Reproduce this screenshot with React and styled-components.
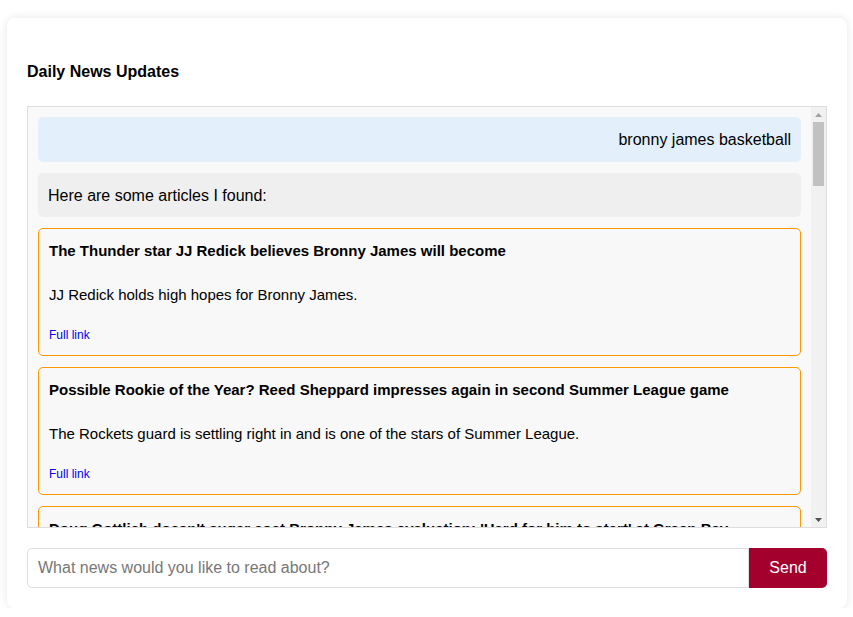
import styled, { createGlobalStyle } from "styled-components"

const GlobalStyle = createGlobalStyle`
    body {
        margin: 0;
        background: #ffffff;
        font-family: "Liberation Sans", Arial, sans-serif;
        color: #000;
    }
`

//styles
const Card = styled.div`
        background: #fff;
        border-radius: 8px;
        box-shadow: 0 0 10px rgba(0, 0, 0, 0.1);
        box-sizing: border-box;
        margin: 18px 0 0 7px;
        padding: 20px;
        width: 840px;
    `

const Title = styled.h2`
        font-size: 16px;
        font-weight: bold;
        line-height: 18px;
        margin: 25px 0;
    `

const ChatFrame = styled.div`
        background: #f9f9f9;
        border: 1px solid #ddd;
        box-sizing: border-box;
        display: flex;
        height: 422px;
    `

const ChatScroll = styled.div`
        flex: 1;
        overflow: hidden;
        padding: 10px;
    `

// the classic scrollbar on the right of the chat
const ScrollBar = styled.div`
        background: #f1f1f1;
        display: flex;
        flex-direction: column;
        width: 15px;
    `

const ScrollArrow = styled.div`
        align-items: center;
        display: flex;
        height: 15px;
        justify-content: center;
    `

const ScrollTrack = styled.div`
        flex: 1;
    `

const ScrollThumb = styled.div`
        background: #c1c1c1;
        height: 64px;
        margin: 0 2px;
    `

const Bubble = styled.div`
        background: ${props => props.$user ? "#e3f0fc" : "#efefef"};
        border-radius: 5px;
        font-size: 16px;
        line-height: 24.5px;
        margin-bottom: 11px;
        padding: 11px 10px 9px;
        text-align: ${props => props.$user ? "right" : "left"};
    `

const Article = styled.div`
        background: #f8f8f8;
        border: 1px solid #ff9800;
        border-radius: 5px;
        margin-bottom: 11px;
        padding: 11px 10px 12px;
    `

const ArticleTitle = styled.h3`
        font-size: 15px;
        font-weight: bold;
        line-height: 22px;
        margin: 0 0 22px;
    `

const ArticleText = styled.p`
        font-size: 15px;
        line-height: 22px;
        margin: 0 0 21px;
    `

const FullLink = styled.a`
        color: #0000ee;
        display: block;
        font-size: 12px;
        line-height: 16px;
        text-decoration: none;
    `

const InputRow = styled.form`
        display: flex;
        margin-top: 20px;
    `

const Input = styled.input`
        border: 1px solid #ddd;
        border-radius: 5px 0 0 5px;
        box-sizing: border-box;
        flex: 1;
        font-family: inherit;
        font-size: 16px;
        height: 40px;
        outline: none;
        padding: 0 10px;

        &::placeholder {
            color: #777;
        }
    `

const SendButton = styled.button`
        background: #a3002d;
        border: none;
        border-radius: 0 5px 5px 0;
        color: #fff;
        font-family: inherit;
        font-size: 16px;
        height: 40px;
        width: 78px;
    `

const articles = [
    { title: "The Thunder star JJ Redick believes Bronny James will become", text: "JJ Redick holds high hopes for Bronny James." },
    { title: "Possible Rookie of the Year? Reed Sheppard impresses again in second Summer League game", text: "The Rockets guard is settling right in and is one of the stars of Summer League." },
    { title: "Doug Gottlieb doesn't sugar coat Bronny James evaluation: 'Hard for him to start' at Green Bay", text: "The former college guard gave a blunt take on the Lakers rookie." },
    { title: "Bronny James struggles again in Lakers Summer League loss", text: "The rookie went scoreless for the second straight game." },
    { title: "LeBron James reacts to son Bronny's first Summer League outing", text: "The proud father was in attendance courtside in San Francisco." },
]

export default function App() {
    return (
        <>
            <GlobalStyle />
            <Card>
                <Title>Daily News Updates</Title>

                <ChatFrame>
                    <ChatScroll>
                        <Bubble $user>bronny james basketball</Bubble>
                        <Bubble>Here are some articles I found:</Bubble>

                        {articles.map((article, i) => (
                            <Article key={i}>
                                <ArticleTitle>{article.title}</ArticleTitle>
                                <ArticleText>{article.text}</ArticleText>
                                <FullLink href="#">Full link</FullLink>
                            </Article>
                        ))}
                    </ChatScroll>

                    <ScrollBar>
                        <ScrollArrow>
                            <svg width="7" height="4" viewBox="0 0 7 4">
                                <polygon points="0,4 3.5,0 7,4" fill="#a3a3a3" />
                            </svg>
                        </ScrollArrow>
                        <ScrollTrack>
                            <ScrollThumb />
                        </ScrollTrack>
                        <ScrollArrow>
                            <svg width="7" height="4" viewBox="0 0 7 4">
                                <polygon points="0,0 7,0 3.5,4" fill="#505050" />
                            </svg>
                        </ScrollArrow>
                    </ScrollBar>
                </ChatFrame>

                <InputRow onSubmit={e => e.preventDefault()}>
                    <Input placeholder="What news would you like to read about?" />
                    <SendButton type="submit">Send</SendButton>
                </InputRow>
            </Card>
        </>
    )
}
